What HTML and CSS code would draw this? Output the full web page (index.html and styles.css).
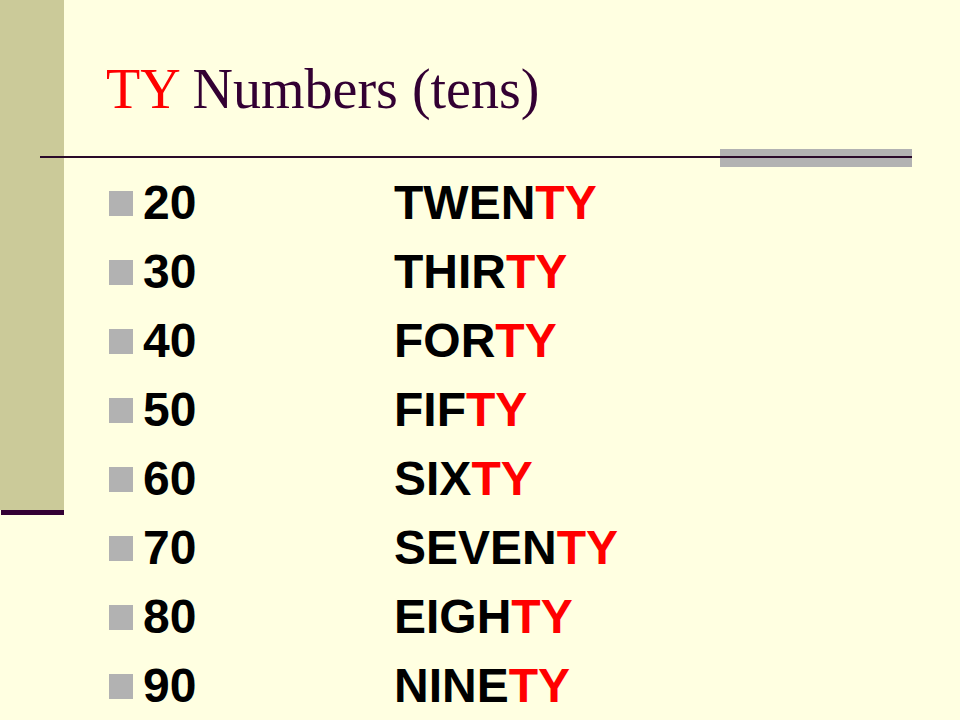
FILE: index.html
```html
<!DOCTYPE html>
<html lang="en">
<head>
<meta charset="utf-8">
<title>TY Numbers (tens)</title>
<link rel="stylesheet" href="styles.css">
</head>
<body>
<div class="slide">
  <aside class="rail">
    <div class="rail-fill"></div>
    <div class="rail-foot"></div>
  </aside>
  <main class="content">
    <h1 class="title"><span class="red">TY</span> Numbers (tens)</h1>
    <div class="rule"></div>
    <ul class="list">
      <li class="item"><span class="bullet"></span><span class="num">20</span><span class="word">TWEN<span class="red">TY</span></span></li>
      <li class="item"><span class="bullet"></span><span class="num">30</span><span class="word">THIR<span class="red">TY</span></span></li>
      <li class="item"><span class="bullet"></span><span class="num">40</span><span class="word">FOR<span class="red">TY</span></span></li>
      <li class="item"><span class="bullet"></span><span class="num">50</span><span class="word">FIF<span class="red">TY</span></span></li>
      <li class="item"><span class="bullet"></span><span class="num">60</span><span class="word">SIX<span class="red">TY</span></span></li>
      <li class="item"><span class="bullet"></span><span class="num">70</span><span class="word">SEVEN<span class="red">TY</span></span></li>
      <li class="item"><span class="bullet"></span><span class="num">80</span><span class="word">EIGH<span class="red">TY</span></span></li>
      <li class="item"><span class="bullet"></span><span class="num">90</span><span class="word">NINE<span class="red">TY</span></span></li>
    </ul>
  </main>
</div>
</body>
</html>
```

FILE: styles.css
```css
html, body {
  margin: 0;
  padding: 0;
}

body {
  background: #ffffe1;
  overflow: hidden;
}

.slide {
  display: flex;
  width: 960px;
  height: 720px;
  background: #ffffe1;
}

.rail {
  display: flex;
  flex-direction: column;
  width: 64px;
  flex: 0 0 64px;
}

.rail-fill {
  height: 510px;
  background: #cbca99;
}

.rail-foot {
  height: 5px;
  margin-left: 1px;
  background: #330033;
}

.content {
  flex: 1;
  display: flex;
  flex-direction: column;
}

.title {
  margin: 0;
  padding: 57px 0 0 42px;
  font-family: "Liberation Serif", "Times New Roman", serif;
  font-weight: normal;
  font-size: 56px;
  line-height: 64px;
  color: #330033;
  white-space: nowrap;
}

.red {
  color: #ff0000;
}

.rule {
  margin: 28px 0 0 -24px;
  width: 872px;
  height: 19px;
  background:
    linear-gradient(#2a0a2a, #2a0a2a) 0 7px / 100% 2px no-repeat,
    linear-gradient(#b2b2b2, #b2b2b2) right top / 192px 100% no-repeat;
}

.list {
  list-style: none;
  margin: 1px 0 0 0;
  padding: 0 0 0 45px;
  font-family: "Liberation Sans", Arial, sans-serif;
  font-weight: bold;
  font-size: 48px;
  line-height: 69px;
  color: #000000;
}

.item {
  display: flex;
  align-items: center;
  height: 69px;
}

.bullet {
  width: 24px;
  height: 25px;
  flex: 0 0 24px;
  margin: 2px 10px 0 0;
  background: #b2b2b2;
}

.num {
  width: 251px;
  flex: 0 0 251px;
}

.word {
  white-space: nowrap;
}
```
